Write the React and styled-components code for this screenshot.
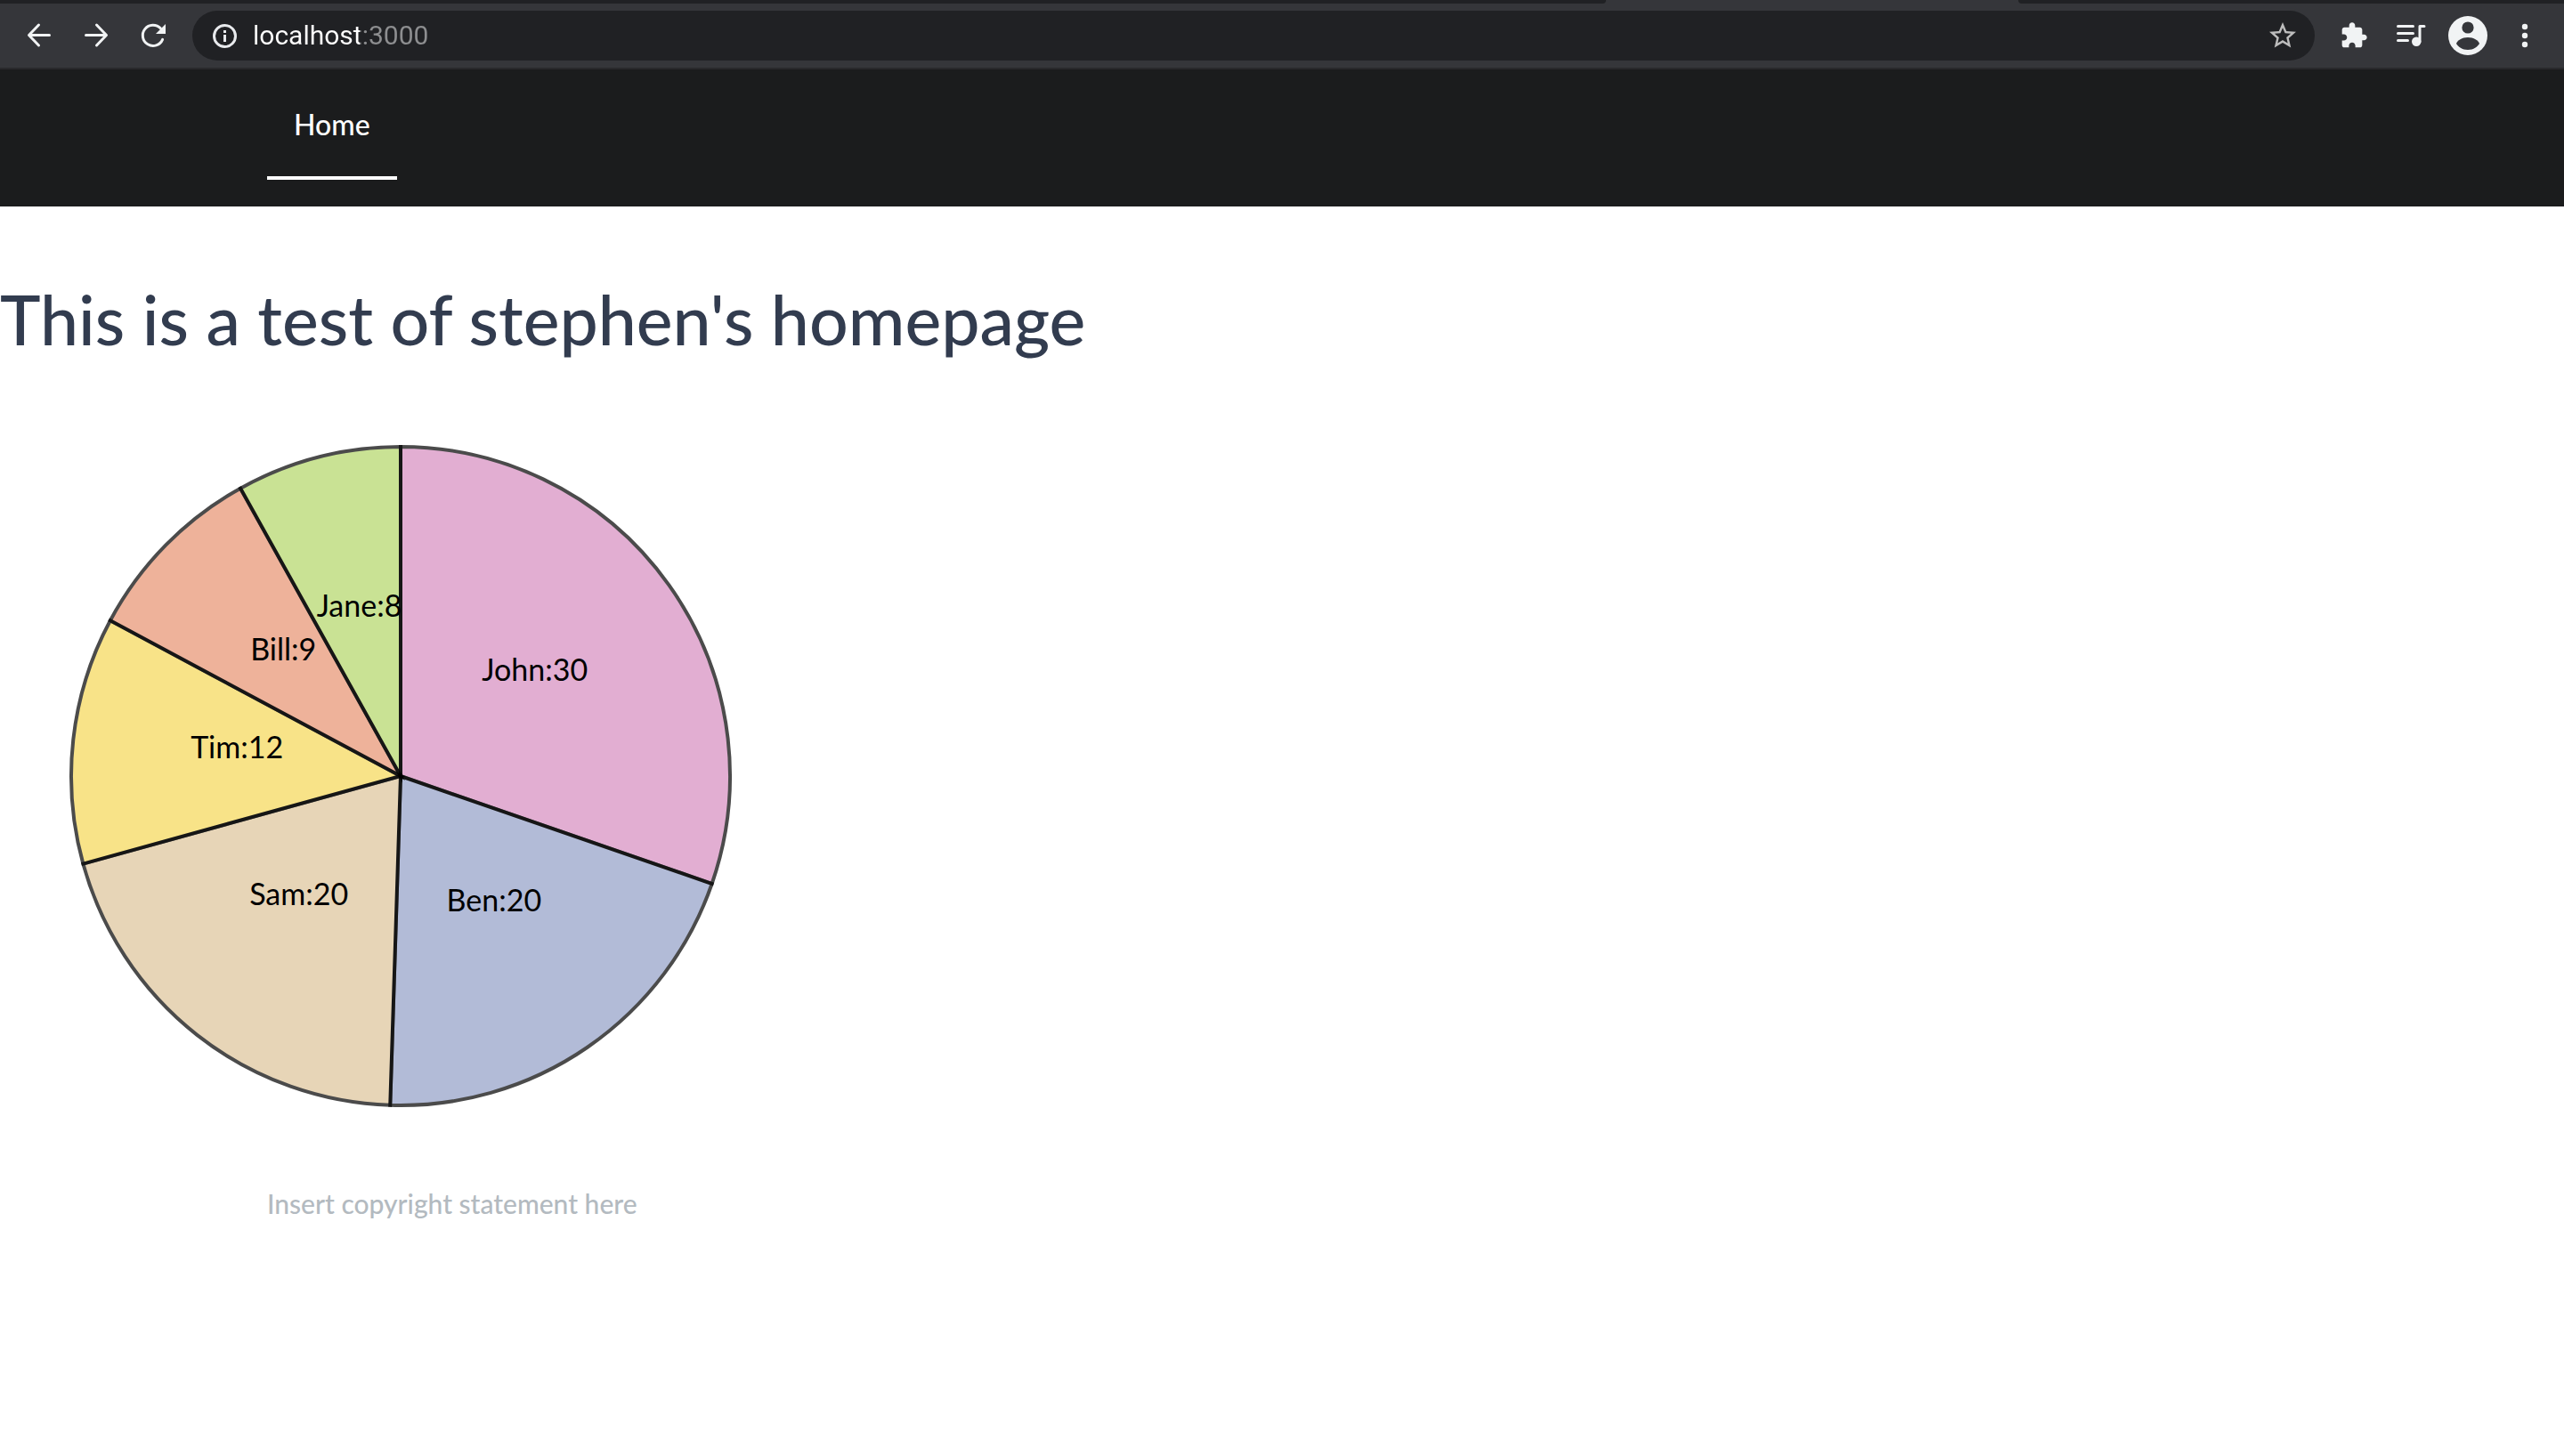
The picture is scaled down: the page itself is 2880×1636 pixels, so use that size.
import React from "react";
import styled, { createGlobalStyle } from "styled-components";

const GlobalStyle = createGlobalStyle`
  *, *::before, *::after { box-sizing: border-box; }
  body {
    margin: 0;
    background: #ffffff;
    font-family: Lato, "Liberation Sans", sans-serif;
  }
`;

const TabStrip = styled.div`
  display: grid;
  grid-template-columns: 1804fr 463fr 613fr;
  height: 4px;
  background: #35363a;
`;

const TabEdge = styled.div`
  background: #202124;
  border-radius: ${(p) => (p.$side === "left" ? "0 0 8px 0" : "0 0 0 8px")};
`;

const Toolbar = styled.div`
  display: flex;
  align-items: center;
  gap: 12px;
  height: 74px;
  padding: 0 12px;
  background: #35363a;
  border-bottom: 2px solid #29292c;
`;

const ToolGroup = styled.div`
  display: flex;
`;

const ToolButton = styled.button`
  display: flex;
  align-items: center;
  justify-content: center;
  width: 64px;
  height: 56px;
  padding: 0;
  border: 0;
  background: none;
  color: #f1f3f4;
`;

const AddressBar = styled.form`
  display: flex;
  flex: 1;
  align-items: center;
  gap: 16px;
  height: 56px;
  padding: 0 18px 0 20px;
  border-radius: 28px;
  background: #202124;
`;

const AddressButton = styled.button`
  display: flex;
  padding: 0;
  border: 0;
  background: none;
  color: ${(p) => p.$color};
`;

const AddressInput = styled.input`
  flex: 1;
  min-width: 0;
  height: 40px;
  padding: 0;
  border: 0;
  outline: 0;
  background: linear-gradient(to right, #ffffff 120px, #8d8e90 120px);
  background-clip: text;
  -webkit-background-clip: text;
  -webkit-text-fill-color: transparent;
  color: #ffffff;
  font: 400 30px/40px Roboto, sans-serif;
`;

const NavBar = styled.nav`
  display: flex;
  padding: 30px 300px;
  background: #1b1c1d;
`;

const NavLink = styled.a`
  padding: 12px 30px 38px;
  border-bottom: 4px solid #ffffff;
  color: #ffffff;
  font-size: 32px;
  font-weight: 500;
  line-height: 40px;
  text-decoration: none;
`;

const Title = styled.h1`
  margin: 78px 0 16px;
  color: #323c4f;
  font-size: 77px;
  font-weight: 500;
  line-height: 96px;
`;

const Chart = styled.svg`
  display: block;
  width: 900px;
  max-width: 100%;
  height: auto;
`;

const Slice = styled.path`
  stroke: #000000;
  stroke-width: 4px;
  opacity: 0.7;
`;

const SliceLabel = styled.text`
  font-size: 34px;
  text-anchor: middle;
`;

const Footer = styled.footer`
  padding: 10px 300px;
  color: #b3bac0;
  font-size: 30px;
  font-weight: 500;
  line-height: 40px;
`;

const BackIcon = () => (
  <svg width="32" height="32" fill="none" stroke="currentColor" strokeWidth="3" strokeLinecap="round" strokeLinejoin="round">
    <path d="M27.5 15.5H5M15.5 4 4.5 15.5l11 11.5" />
  </svg>
);

const ForwardIcon = () => (
  <svg width="32" height="32" fill="none" stroke="currentColor" strokeWidth="3" strokeLinecap="round" strokeLinejoin="round">
    <path d="M4.5 15.5H27M16.5 4l11 11.5-11 11.5" />
  </svg>
);

const ReloadIcon = () => (
  <svg width="32" height="32" fill="none">
    <path d="M26.6 20.3A11.6 11.6 0 1 1 24.3 7.8" stroke="currentColor" strokeWidth="3" strokeLinecap="round" />
    <path d="M30 3v11H19z" fill="currentColor" />
  </svg>
);

const InfoIcon = () => (
  <svg width="32" height="32" fill="none">
    <circle cx="16.5" cy="16.5" r="12" stroke="currentColor" strokeWidth="3" />
    <path d="M15 10h3v3h-3zM15 15h3v8h-3z" fill="currentColor" />
  </svg>
);

const StarIcon = () => (
  <svg width="36" height="36" viewBox="0 0 24 24" fill="currentColor">
    <path d="M22 9.24l-7.19-.62L12 2 9.19 8.63 2 9.24l5.46 4.73L5.82 21 12 17.27 18.18 21l-1.63-7.03L22 9.24zM12 15.4l-3.76 2.27 1-4.28-3.32-2.88 4.38-.38L12 6.1l1.71 4.04 4.38.38-3.32 2.88 1 4.28L12 15.4z" />
  </svg>
);

const ExtensionIcon = () => (
  <svg width="32" height="32" viewBox="0 0 24 24" fill="currentColor">
    <path d="M20.5 11H19V7c0-1.1-.9-2-2-2h-4V3.5C13 2.12 11.88 1 10.5 1S8 2.12 8 3.5V5H4c-1.1 0-1.99.9-1.99 2v3.8H3.5c1.49 0 2.7 1.21 2.7 2.7s-1.21 2.7-2.7 2.7H2V20c0 1.1.9 2 2 2h3.8v-1.5c0-1.49 1.21-2.7 2.7-2.7 1.49 0 2.7 1.21 2.7 2.7V22H17c1.1 0 2-.9 2-2v-4h1.5c1.38 0 2.5-1.12 2.5-2.5S21.88 11 20.5 11z" />
  </svg>
);

const MusicIcon = () => (
  <svg width="36" height="32" fill="none" stroke="currentColor" strokeWidth="3" strokeLinecap="round">
    <path d="M3.5 5.5h17M3.5 13.5h17M3.5 21.5h11" />
    <path d="M28 23V5.5h5" strokeLinejoin="round" />
    <circle cx="24.2" cy="22.8" r="5.2" fill="currentColor" stroke="none" />
  </svg>
);

const AvatarIcon = () => (
  <svg width="44" height="44">
    <circle cx="22" cy="22" r="22" fill="currentColor" />
    <circle cx="22" cy="13" r="6.6" fill="#35363a" />
    <path d="M9 31c1-3.500 6.500-7 13-7s12 3.500 13 7c-2 3.500-6.500 7-13 7s-11-3.500-13-7z" fill="#35363a" />
  </svg>
);

const MenuIcon = () => (
  <svg width="32" height="32" fill="currentColor">
    <circle cx="16" cy="6" r="3.200" />
    <circle cx="16" cy="16" r="3.200" />
    <circle cx="16" cy="26" r="3.200" />
  </svg>
);

const people = [
  { name: "John", value: 30, color: "rgb(214,141,192)" },
  { name: "Ben", value: 20, color: "rgb(146,159,199)" },
  { name: "Sam", value: 20, color: "rgb(221,196,154)" },
  { name: "Tim", value: 12, color: "rgb(246,216,87)" },
  { name: "Bill", value: 9, color: "rgb(231,146,112)" },
  { name: "Jane", value: 8, color: "rgb(179,215,104)" },
];

const RADIUS = 370;

const pointAt = (angle, radius) => [
  radius * Math.sin(angle),
  -radius * Math.cos(angle),
];

function buildSlices(data) {
  const total = data.reduce((sum, d) => sum + d.value, 0);
  let start = 0;
  return data.map((d) => {
    const end = start + (d.value / total) * Math.PI * 2;
    const [x0, y0] = pointAt(start, RADIUS);
    const [x1, y1] = pointAt(end, RADIUS);
    const [labelX, labelY] = pointAt((start + end) / 2, RADIUS / 2);
    const large = end - start > Math.PI ? 1 : 0;
    start = end;
    return {
      ...d,
      labelX,
      labelY,
      path: `M${x0},${y0}A${RADIUS},${RADIUS},0,${large},1,${x1},${y1}L0,0Z`,
    };
  });
}

function PieChart({ data }) {
  const slices = buildSlices(data);
  return (
    <Chart viewBox="-450 -450 900 900" role="img" aria-label="Pie chart">
      {slices.map((s) => (
        <Slice key={s.name} d={s.path} fill={s.color} />
      ))}
      {slices.map((s) => (
        <SliceLabel key={s.name} x={s.labelX} y={s.labelY}>
          {`${s.name}:${s.value}`}
        </SliceLabel>
      ))}
    </Chart>
  );
}

export default function App() {
  return (
    <>
      <GlobalStyle />
      <header>
        <TabStrip>
          <TabEdge $side="left" />
          <div />
          <TabEdge $side="right" />
        </TabStrip>
        <Toolbar>
          <ToolGroup>
            <ToolButton aria-label="Back"><BackIcon /></ToolButton>
            <ToolButton aria-label="Forward"><ForwardIcon /></ToolButton>
            <ToolButton aria-label="Reload"><ReloadIcon /></ToolButton>
          </ToolGroup>
          <AddressBar onSubmit={(e) => e.preventDefault()}>
            <AddressButton type="button" $color="#e8eaed" aria-label="Site information">
              <InfoIcon />
            </AddressButton>
            <AddressInput aria-label="Address" defaultValue="localhost:3000" spellCheck={false} />
            <AddressButton type="button" $color="#bdbdbd" aria-label="Bookmark">
              <StarIcon />
            </AddressButton>
          </AddressBar>
          <ToolGroup>
            <ToolButton aria-label="Extensions"><ExtensionIcon /></ToolButton>
            <ToolButton aria-label="Media"><MusicIcon /></ToolButton>
            <ToolButton aria-label="Profile"><AvatarIcon /></ToolButton>
            <ToolButton aria-label="Menu"><MenuIcon /></ToolButton>
          </ToolGroup>
        </Toolbar>
      </header>
      <NavBar>
        <NavLink href="#home">Home</NavLink>
      </NavBar>
      <main>
        <Title>This is a test of stephen's homepage</Title>
        <PieChart data={people} />
      </main>
      <Footer>Insert copyright statement here</Footer>
    </>
  );
}
